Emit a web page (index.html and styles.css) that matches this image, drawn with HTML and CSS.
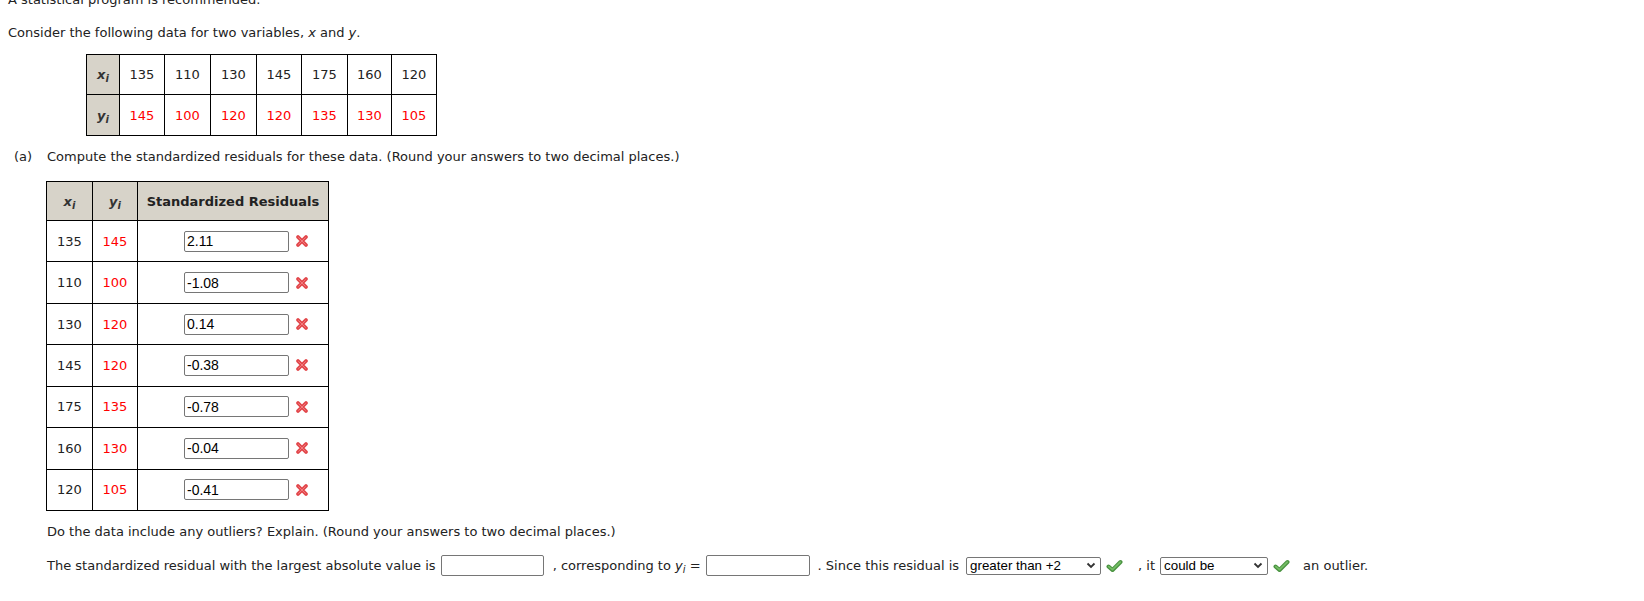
FILE: index.html
```html
<!DOCTYPE html>
<html lang="en">
<head>
<meta charset="utf-8">
<title>Standardized residuals</title>
<link rel="stylesheet" href="styles.css">
</head>
<body>
<div class="page">
  <p class="intro">A statistical program is recommended.</p>
  <p class="lead">Consider the following data for two variables, <i>x</i> and <i>y</i>.</p>

  <div class="grid-top">
    <div class="hd"><i>x<sub>i</sub></i></div>
    <div class="c">135</div><div class="c">110</div><div class="c">130</div><div class="c">145</div><div class="c">175</div><div class="c">160</div><div class="c">120</div>
    <div class="hd"><i>y<sub>i</sub></i></div>
    <div class="c red">145</div><div class="c red">100</div><div class="c red">120</div><div class="c red">120</div><div class="c red">135</div><div class="c red">130</div><div class="c red">105</div>
  </div>

  <div class="part"><span class="label">(a)</span><span>Compute the standardized residuals for these data. (Round your answers to two decimal places.)</span></div>

  <div class="grid-res">
    <div class="hd"><i>x<sub>i</sub></i></div>
    <div class="hd"><i>y<sub>i</sub></i></div>
    <div class="hd title">Standardized Residuals</div>

    <div class="c">135</div><div class="c red">145</div>
    <div class="ans"><input class="box" type="text" value="2.11"><svg class="xmark" viewBox="0 0 14 14" width="14" height="14"><path d="M3 3 L11 11 M11 3 L3 11" stroke="#e2474b" stroke-width="3.8" stroke-linecap="round"/><path d="M3.6 3.6 L10.4 10.4 M10.4 3.6 L3.6 10.4" stroke="#f17b7e" stroke-width="1" stroke-linecap="round"/></svg></div>

    <div class="c">110</div><div class="c red">100</div>
    <div class="ans"><input class="box" type="text" value="-1.08"><svg class="xmark" viewBox="0 0 14 14" width="14" height="14"><path d="M3 3 L11 11 M11 3 L3 11" stroke="#e2474b" stroke-width="3.8" stroke-linecap="round"/><path d="M3.6 3.6 L10.4 10.4 M10.4 3.6 L3.6 10.4" stroke="#f17b7e" stroke-width="1" stroke-linecap="round"/></svg></div>

    <div class="c">130</div><div class="c red">120</div>
    <div class="ans"><input class="box" type="text" value="0.14"><svg class="xmark" viewBox="0 0 14 14" width="14" height="14"><path d="M3 3 L11 11 M11 3 L3 11" stroke="#e2474b" stroke-width="3.8" stroke-linecap="round"/><path d="M3.6 3.6 L10.4 10.4 M10.4 3.6 L3.6 10.4" stroke="#f17b7e" stroke-width="1" stroke-linecap="round"/></svg></div>

    <div class="c">145</div><div class="c red">120</div>
    <div class="ans"><input class="box" type="text" value="-0.38"><svg class="xmark" viewBox="0 0 14 14" width="14" height="14"><path d="M3 3 L11 11 M11 3 L3 11" stroke="#e2474b" stroke-width="3.8" stroke-linecap="round"/><path d="M3.6 3.6 L10.4 10.4 M10.4 3.6 L3.6 10.4" stroke="#f17b7e" stroke-width="1" stroke-linecap="round"/></svg></div>

    <div class="c">175</div><div class="c red">135</div>
    <div class="ans"><input class="box" type="text" value="-0.78"><svg class="xmark" viewBox="0 0 14 14" width="14" height="14"><path d="M3 3 L11 11 M11 3 L3 11" stroke="#e2474b" stroke-width="3.8" stroke-linecap="round"/><path d="M3.6 3.6 L10.4 10.4 M10.4 3.6 L3.6 10.4" stroke="#f17b7e" stroke-width="1" stroke-linecap="round"/></svg></div>

    <div class="c">160</div><div class="c red">130</div>
    <div class="ans"><input class="box" type="text" value="-0.04"><svg class="xmark" viewBox="0 0 14 14" width="14" height="14"><path d="M3 3 L11 11 M11 3 L3 11" stroke="#e2474b" stroke-width="3.8" stroke-linecap="round"/><path d="M3.6 3.6 L10.4 10.4 M10.4 3.6 L3.6 10.4" stroke="#f17b7e" stroke-width="1" stroke-linecap="round"/></svg></div>

    <div class="c">120</div><div class="c red">105</div>
    <div class="ans"><input class="box" type="text" value="-0.41"><svg class="xmark" viewBox="0 0 14 14" width="14" height="14"><path d="M3 3 L11 11 M11 3 L3 11" stroke="#e2474b" stroke-width="3.8" stroke-linecap="round"/><path d="M3.6 3.6 L10.4 10.4 M10.4 3.6 L3.6 10.4" stroke="#f17b7e" stroke-width="1" stroke-linecap="round"/></svg></div>
  </div>

  <p class="q">Do the data include any outliers? Explain. (Round your answers to two decimal places.)</p>

  <div class="row">
    <span class="t1">The standardized residual with the largest absolute value is</span>
    <input class="box wide1" type="text" value="">
    <span class="t2">, corresponding to <i>y<sub>i</sub></i> =</span>
    <input class="box wide2" type="text" value="">
    <span class="t3">. Since this residual is</span>
    <span class="sel sel1">greater than +2<svg class="chev" viewBox="0 0 10 7" width="10" height="7"><path d="M1.5 1.5 L5 5 L8.5 1.5" fill="none" stroke="#333" stroke-width="1.8"/></svg></span>
    <svg class="check" viewBox="0 0 17 14" width="17" height="14"><path d="M2.5 7.5 L6.5 11 L14.5 3" fill="none" stroke="#4a9341" stroke-width="4" stroke-linecap="round" stroke-linejoin="round"/><path d="M2.8 7.6 L6.5 10.6 L14.2 3.2" fill="none" stroke="#74bd64" stroke-width="1.8" stroke-linecap="round" stroke-linejoin="round"/></svg>
    <span class="t4">, it</span>
    <span class="sel sel2">could be<svg class="chev" viewBox="0 0 10 7" width="10" height="7"><path d="M1.5 1.5 L5 5 L8.5 1.5" fill="none" stroke="#333" stroke-width="1.8"/></svg></span>
    <svg class="check" viewBox="0 0 17 14" width="17" height="14"><path d="M2.5 7.5 L6.5 11 L14.5 3" fill="none" stroke="#4a9341" stroke-width="4" stroke-linecap="round" stroke-linejoin="round"/><path d="M2.8 7.6 L6.5 10.6 L14.2 3.2" fill="none" stroke="#74bd64" stroke-width="1.8" stroke-linecap="round" stroke-linejoin="round"/></svg>
    <span class="t5">an outlier.</span>
  </div>
</div>
</body>
</html>
```

FILE: styles.css
```css
html, body {
  margin: 0;
  background: #fff;
}
body {
  font-family: "DejaVu Sans", Verdana, sans-serif;
  font-size: 13px;
  color: #222;
}
.page {
  display: flow-root;
  padding-left: 8px;
}
p {
  line-height: 16px;
}
.intro {
  margin: -8.5px 0 0;
}
.lead {
  margin: 17px 0 0;
}
sub {
  font-size: 10px;
  vertical-align: -3px;
  line-height: 0;
}
.red {
  color: #ff0000;
}

/* top data grid */
.grid-top {
  display: grid;
  width: max-content;
  grid-template-columns: 32px 44px 45px 45px 44px 45px 43px 44px;
  grid-template-rows: 39px 40px;
  gap: 1px;
  background: #000;
  border: 1px solid #000;
  margin: 13.5px 0 0 78px;
}
.hd {
  background: #d7d3c9;
  display: flex;
  align-items: center;
  justify-content: center;
  font-weight: bold;
  color: #333;
}
.c {
  background: #fff;
  display: flex;
  align-items: center;
  justify-content: center;
}

.part {
  display: flex;
  margin-top: 13px;
  line-height: 16px;
}
.label {
  margin-left: 6px;
  width: 33px;
}

/* residuals grid */
.grid-res {
  display: grid;
  width: max-content;
  grid-template-columns: 45px 44px 190px;
  grid-template-rows: 38px repeat(7, 40.43px);
  gap: 1px;
  background: #000;
  border: 1px solid #000;
  margin: 16px 0 0 38px;
}
.title {
  font-style: normal;
  color: #222;
}
.ans {
  background: #fff;
  display: flex;
  align-items: center;
  padding-left: 46px;
}
.box {
  box-sizing: border-box;
  width: 105px;
  height: 21px;
  margin: 0;
  border: 1px solid #767676;
  border-radius: 2px;
  padding: 0 2px;
  font-family: "Liberation Sans", Arial, sans-serif;
  font-size: 14px;
  color: #000;
  background: #fff;
}
.xmark {
  margin-left: 6px;
  flex: none;
}

.q {
  margin: 13px 0 0 39px;
}

.row {
  display: flex;
  align-items: center;
  height: 22px;
  margin: 15px 0 0 39px;
  white-space: pre;
}
.wide1 {
  width: 103px;
  margin-left: 5px;
}
.t2 {
  margin-left: 9px;
}
.wide2 {
  width: 104px;
  margin-left: 5px;
}
.t3 {
  margin-left: 8px;
}
.sel {
  box-sizing: border-box;
  display: inline-flex;
  align-items: center;
  justify-content: space-between;
  height: 18px;
  border: 1px solid #767676;
  border-radius: 2px;
  padding: 0 4px 0 3px;
  font-family: "Liberation Sans", Arial, sans-serif;
  font-size: 13.333px;
  color: #000;
}
.sel1 {
  width: 135px;
  margin-left: 7px;
}
.sel2 {
  width: 108px;
  margin-left: 5px;
}
.check {
  margin-left: 5px;
  flex: none;
}
.t4 {
  margin-left: 15px;
}
.t5 {
  margin-left: 13px;
}
```
